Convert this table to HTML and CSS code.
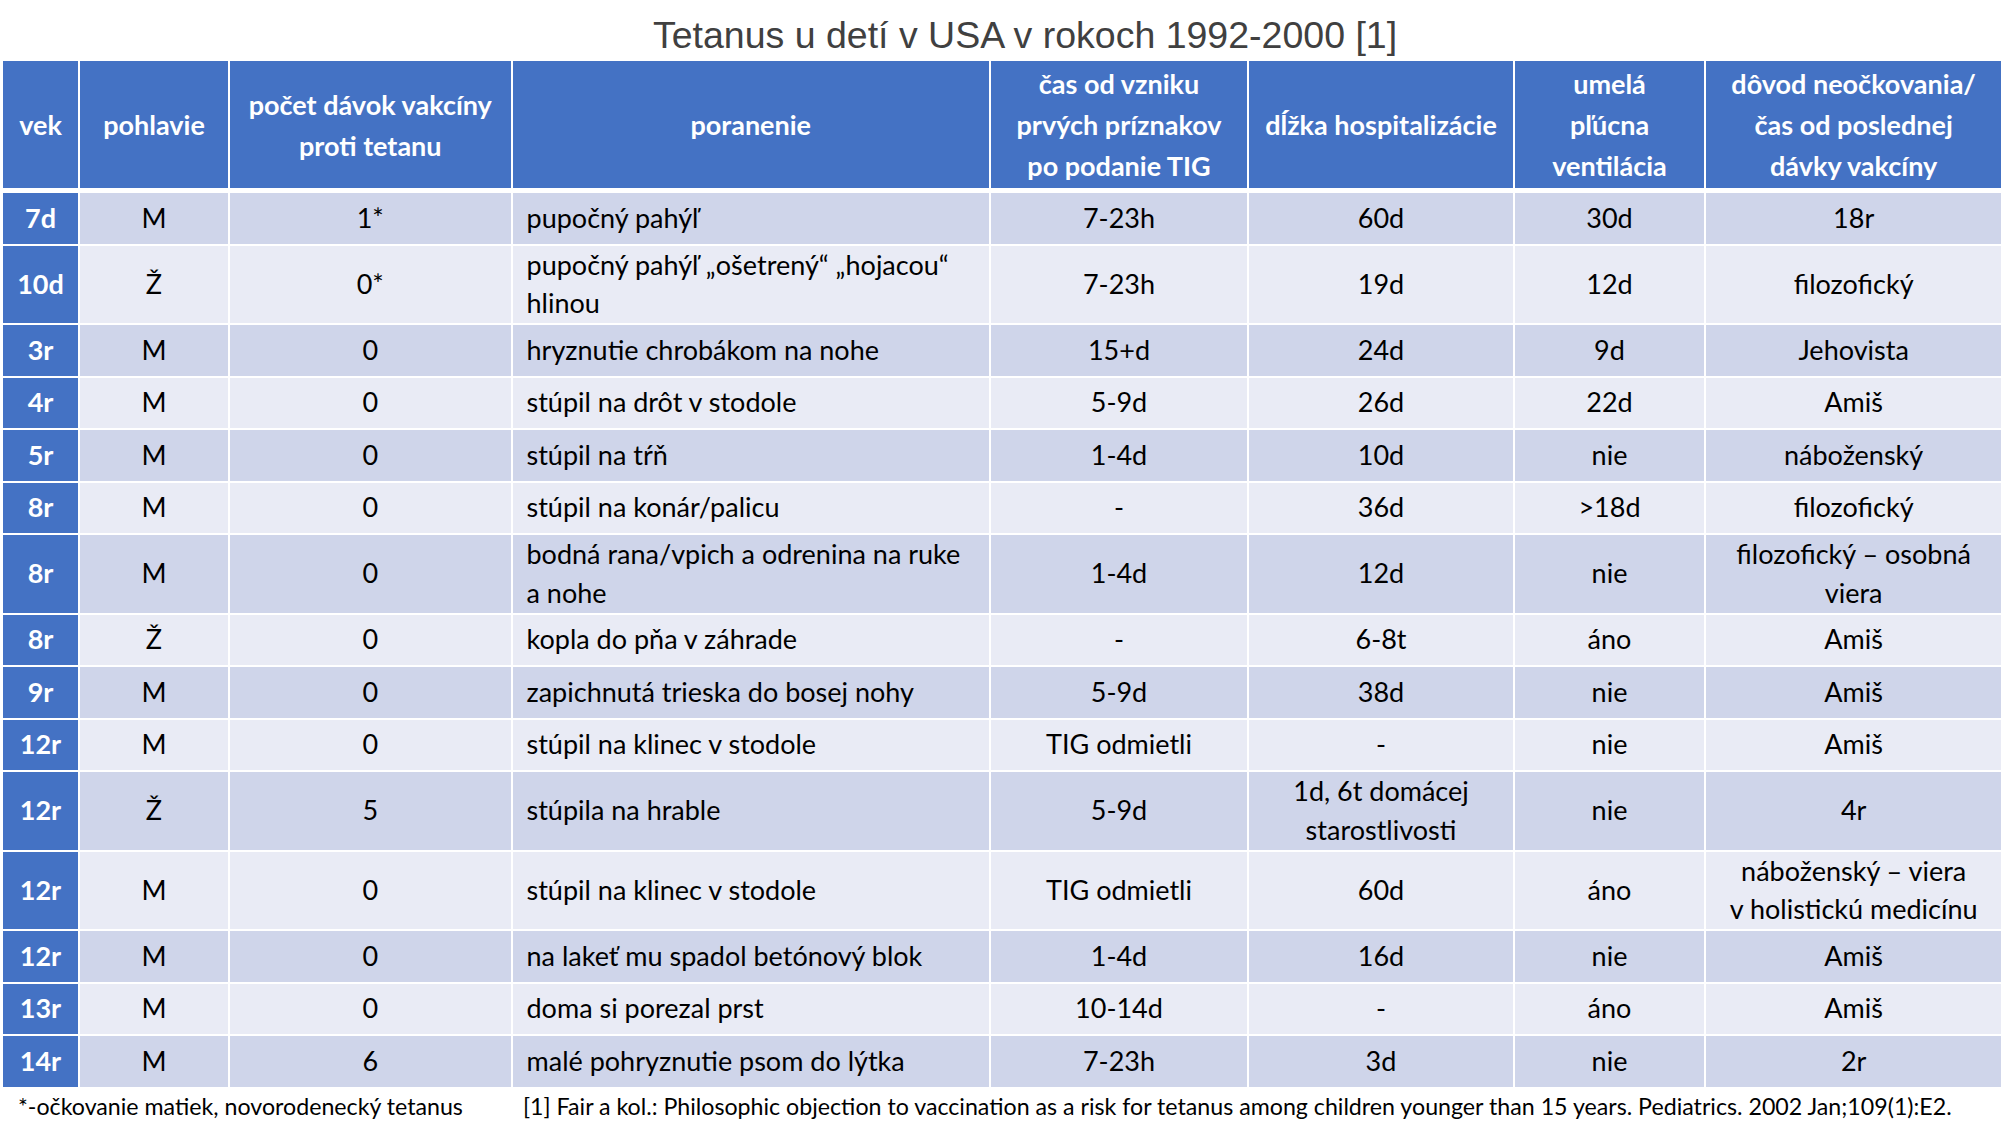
FILE: index.html
```html
<!DOCTYPE html>
<html lang="sk">
<head>
<meta charset="utf-8">
<title>Tetanus u detí v USA v rokoch 1992-2000</title>
<link rel="stylesheet" href="styles.css">
</head>
<body>
<div class="page">
  <h1 class="title">Tetanus u detí v USA v rokoch 1992-2000 [1]</h1>
  <div class="table">
    <div class="row head">
      <div class="cell">vek</div>
      <div class="cell">pohlavie</div>
      <div class="cell">počet dávok vakcíny<br>proti tetanu</div>
      <div class="cell">poranenie</div>
      <div class="cell">čas od vzniku<br>prvých príznakov<br>po podanie TIG</div>
      <div class="cell">dĺžka hospitalizácie</div>
      <div class="cell">umelá<br>pľúcna<br>ventilácia</div>
      <div class="cell">dôvod neočkovania/<br>čas od poslednej<br>dávky vakcíny</div>
    </div>

    <div class="row dark">
      <div class="cell age">7d</div><div class="cell">M</div><div class="cell">1*</div>
      <div class="cell injury">pupočný pahýľ</div><div class="cell">7-23h</div><div class="cell">60d</div><div class="cell">30d</div><div class="cell">18r</div>
    </div>
    <div class="row light">
      <div class="cell age">10d</div><div class="cell">Ž</div><div class="cell">0*</div>
      <div class="cell injury">pupočný pahýľ „ošetrený“ „hojacou“<br>hlinou</div><div class="cell">7-23h</div><div class="cell">19d</div><div class="cell">12d</div><div class="cell">filozofický</div>
    </div>
    <div class="row dark">
      <div class="cell age">3r</div><div class="cell">M</div><div class="cell">0</div>
      <div class="cell injury">hryznutie chrobákom na nohe</div><div class="cell">15+d</div><div class="cell">24d</div><div class="cell">9d</div><div class="cell">Jehovista</div>
    </div>
    <div class="row light">
      <div class="cell age">4r</div><div class="cell">M</div><div class="cell">0</div>
      <div class="cell injury">stúpil na drôt v stodole</div><div class="cell">5-9d</div><div class="cell">26d</div><div class="cell">22d</div><div class="cell">Amiš</div>
    </div>
    <div class="row dark">
      <div class="cell age">5r</div><div class="cell">M</div><div class="cell">0</div>
      <div class="cell injury">stúpil na tŕň</div><div class="cell">1-4d</div><div class="cell">10d</div><div class="cell">nie</div><div class="cell">náboženský</div>
    </div>
    <div class="row light">
      <div class="cell age">8r</div><div class="cell">M</div><div class="cell">0</div>
      <div class="cell injury">stúpil na konár/palicu</div><div class="cell">-</div><div class="cell">36d</div><div class="cell">&gt;18d</div><div class="cell">filozofický</div>
    </div>
    <div class="row dark">
      <div class="cell age">8r</div><div class="cell">M</div><div class="cell">0</div>
      <div class="cell injury">bodná rana/vpich a odrenina na ruke<br>a nohe</div><div class="cell">1-4d</div><div class="cell">12d</div><div class="cell">nie</div><div class="cell">filozofický – osobná<br>viera</div>
    </div>
    <div class="row light">
      <div class="cell age">8r</div><div class="cell">Ž</div><div class="cell">0</div>
      <div class="cell injury">kopla do pňa v záhrade</div><div class="cell">-</div><div class="cell">6-8t</div><div class="cell">áno</div><div class="cell">Amiš</div>
    </div>
    <div class="row dark">
      <div class="cell age">9r</div><div class="cell">M</div><div class="cell">0</div>
      <div class="cell injury">zapichnutá trieska do bosej nohy</div><div class="cell">5-9d</div><div class="cell">38d</div><div class="cell">nie</div><div class="cell">Amiš</div>
    </div>
    <div class="row light">
      <div class="cell age">12r</div><div class="cell">M</div><div class="cell">0</div>
      <div class="cell injury">stúpil na klinec v stodole</div><div class="cell">TIG odmietli</div><div class="cell">-</div><div class="cell">nie</div><div class="cell">Amiš</div>
    </div>
    <div class="row dark">
      <div class="cell age">12r</div><div class="cell">Ž</div><div class="cell">5</div>
      <div class="cell injury">stúpila na hrable</div><div class="cell">5-9d</div><div class="cell">1d, 6t domácej<br>starostlivosti</div><div class="cell">nie</div><div class="cell">4r</div>
    </div>
    <div class="row light">
      <div class="cell age">12r</div><div class="cell">M</div><div class="cell">0</div>
      <div class="cell injury">stúpil na klinec v stodole</div><div class="cell">TIG odmietli</div><div class="cell">60d</div><div class="cell">áno</div><div class="cell">náboženský – viera<br>v holistickú medicínu</div>
    </div>
    <div class="row dark">
      <div class="cell age">12r</div><div class="cell">M</div><div class="cell">0</div>
      <div class="cell injury">na lakeť mu spadol betónový blok</div><div class="cell">1-4d</div><div class="cell">16d</div><div class="cell">nie</div><div class="cell">Amiš</div>
    </div>
    <div class="row light">
      <div class="cell age">13r</div><div class="cell">M</div><div class="cell">0</div>
      <div class="cell injury">doma si porezal prst</div><div class="cell">10-14d</div><div class="cell">-</div><div class="cell">áno</div><div class="cell">Amiš</div>
    </div>
    <div class="row dark">
      <div class="cell age">14r</div><div class="cell">M</div><div class="cell">6</div>
      <div class="cell injury">malé pohryznutie psom do lýtka</div><div class="cell">7-23h</div><div class="cell">3d</div><div class="cell">nie</div><div class="cell">2r</div>
    </div>
  </div>
  <div class="notes">
    <span class="note-a">*-očkovanie matiek, novorodenecký tetanus</span>
    <span class="note-b">[1] Fair a kol.: Philosophic objection to vaccination as a risk for tetanus among children younger than 15 years. Pediatrics. 2002 Jan;109(1):E2.</span>
  </div>
</div>
</body>
</html>
```

FILE: styles.css
```css
html, body {
  margin: 0;
  padding: 0;
  background: #ffffff;
}

.page {
  width: 2007px;
  height: 1137px;
  overflow: hidden;
  font-family: Lato, "Open Sans", sans-serif;
  color: #000000;
}

.title {
  margin: 0;
  height: 61px;
  box-sizing: border-box;
  padding: 10px 0 0 43px;
  font-family: "Liberation Sans", Arial, sans-serif;
  font-weight: normal;
  font-size: 37.5px;
  line-height: 51px;
  color: #404040;
  text-align: center;
  white-space: nowrap;
}

.table {
  margin-left: 3px;
  width: 1998px;
  display: flex;
  flex-direction: column;
  gap: 2px;
}

.row {
  display: grid;
  grid-template-columns: 75px 148px 280.5px 476.5px 256px 264px 189px 295.3px;
  column-gap: 2px;
  min-height: 50.5px;
  font-size: 27px;
  line-height: 38.75px;
}

.cell {
  display: flex;
  align-items: center;
  justify-content: center;
  text-align: center;
  white-space: nowrap;
}

.head {
  height: 127px;
  margin-bottom: 3px;
  font-weight: bold;
  line-height: 41px;
  color: #ffffff;
}

.head .cell {
  background: #4472c4;
}

.dark .cell {
  background: #cfd5ea;
}

.light .cell {
  background: #e9ebf5;
}

.row .cell.age {
  background: #4472c4;
  color: #ffffff;
  font-weight: bold;
}

.row .cell.injury {
  justify-content: flex-start;
  text-align: left;
  padding-left: 14px;
}

.notes {
  display: flex;
  margin-top: 4px;
  padding-left: 18px;
  font-size: 23.2px;
  line-height: 30px;
  white-space: nowrap;
}

.note-a {
  width: 505px;
  flex: none;
}
```
